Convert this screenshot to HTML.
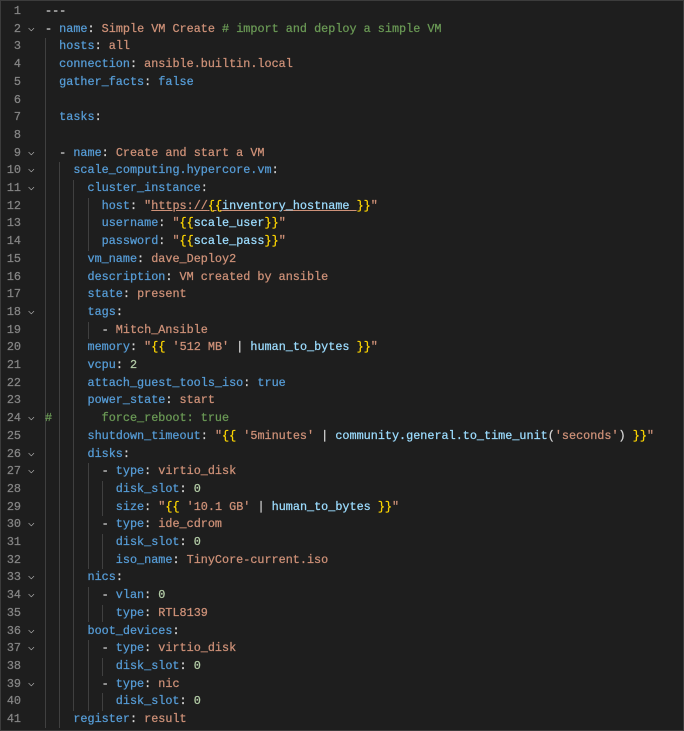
<!DOCTYPE html>
<html><head><meta charset="utf-8"><style>
html,body{margin:0;padding:0;background:#1e1e1e;}
body{width:684px;height:731px;position:relative;overflow:hidden;font-family:"Liberation Mono",monospace;font-size:11.8px;}
.l{position:absolute;left:0;height:17.7px;line-height:17.7px;white-space:pre;color:#d4d4d4;-webkit-text-stroke:0.25px currentColor;}
.n{position:absolute;left:0;width:21px;text-align:right;color:#858585;}
.f{position:absolute;left:28px;color:#c5c5c5;font-size:11px;-webkit-text-stroke:0;}
.c{position:absolute;left:45px;}
.k{color:#569cd6}.s{color:#ce9178}.m{color:#6a9955}.d{color:#b5cea8}.b{color:#ffd700}.v{color:#9cdcfe}
.u{text-decoration:underline}
.g{position:absolute;width:1px;background:#404040;}
.frame{position:absolute;inset:0;border:1px solid #3c3c3c;pointer-events:none}
</style></head><body>
<div class="g" style="left:45px;top:38.4px;height:690px"></div>
<div class="g" style="left:59px;top:162.3px;height:566px"></div>
<div class="g" style="left:73px;top:180px;height:531px"></div>
<div class="g" style="left:88px;top:197.7px;height:53px"></div>
<div class="g" style="left:88px;top:321.6px;height:17.7px"></div>
<div class="g" style="left:88px;top:463.2px;height:106px"></div>
<div class="g" style="left:88px;top:587.1px;height:35.4px"></div>
<div class="g" style="left:88px;top:640.2px;height:70.8px"></div>
<div class="g" style="left:102px;top:480.9px;height:35.4px"></div>
<div class="g" style="left:102px;top:534px;height:35.4px"></div>
<div class="g" style="left:102px;top:604.8px;height:17.7px"></div>
<div class="g" style="left:102px;top:657.9px;height:17.7px"></div>
<div class="g" style="left:102px;top:693.3px;height:17.7px"></div>

<div class="l" style="top:3px"><span class="n">1</span><span class="c">---</span></div>
<div class="l" style="top:20.7px"><span class="n">2</span><span class="f">⌵</span><span class="c">- <span class="k">name</span>: <span class="s">Simple VM Create</span> <span class="m"># import and deploy a simple VM</span></span></div>
<div class="l" style="top:38.4px"><span class="n">3</span><span class="c">  <span class="k">hosts</span>: <span class="s">all</span></span></div>
<div class="l" style="top:56.1px"><span class="n">4</span><span class="c">  <span class="k">connection</span>: <span class="s">ansible.builtin.local</span></span></div>
<div class="l" style="top:73.8px"><span class="n">5</span><span class="c">  <span class="k">gather_facts</span>: <span class="k">false</span></span></div>
<div class="l" style="top:91.5px"><span class="n">6</span></div>
<div class="l" style="top:109.2px"><span class="n">7</span><span class="c">  <span class="k">tasks</span>:</span></div>
<div class="l" style="top:126.9px"><span class="n">8</span></div>
<div class="l" style="top:144.6px"><span class="n">9</span><span class="f">⌵</span><span class="c">  - <span class="k">name</span>: <span class="s">Create and start a VM</span></span></div>
<div class="l" style="top:162.3px"><span class="n">10</span><span class="f">⌵</span><span class="c">    <span class="k">scale_computing.hypercore.vm</span>:</span></div>
<div class="l" style="top:180px"><span class="n">11</span><span class="f">⌵</span><span class="c">      <span class="k">cluster_instance</span>:</span></div>
<div class="l" style="top:197.7px"><span class="n">12</span><span class="c">        <span class="k">host</span>: <span class="s">"<span class="u">https://<span class="b">{{</span><span class="v">inventory_hostname</span> </span><span class="b">}}</span>"</span></span></div>
<div class="l" style="top:215.4px"><span class="n">13</span><span class="c">        <span class="k">username</span>: <span class="s">"<span class="b">{{</span><span class="v">scale_user</span><span class="b">}}</span>"</span></span></div>
<div class="l" style="top:233.1px"><span class="n">14</span><span class="c">        <span class="k">password</span>: <span class="s">"<span class="b">{{</span><span class="v">scale_pass</span><span class="b">}}</span>"</span></span></div>
<div class="l" style="top:250.8px"><span class="n">15</span><span class="c">      <span class="k">vm_name</span>: <span class="s">dave_Deploy2</span></span></div>
<div class="l" style="top:268.5px"><span class="n">16</span><span class="c">      <span class="k">description</span>: <span class="s">VM created by ansible</span></span></div>
<div class="l" style="top:286.2px"><span class="n">17</span><span class="c">      <span class="k">state</span>: <span class="s">present</span></span></div>
<div class="l" style="top:303.9px"><span class="n">18</span><span class="f">⌵</span><span class="c">      <span class="k">tags</span>:</span></div>
<div class="l" style="top:321.6px"><span class="n">19</span><span class="c">        - <span class="s">Mitch_Ansible</span></span></div>
<div class="l" style="top:339.3px"><span class="n">20</span><span class="c">      <span class="k">memory</span>: <span class="s">"<span class="b">{{</span> '512 MB' <span style="color:#d4d4d4">|</span> <span class="v">human_to_bytes</span> <span class="b">}}</span>"</span></span></div>
<div class="l" style="top:357px"><span class="n">21</span><span class="c">      <span class="k">vcpu</span>: <span class="d">2</span></span></div>
<div class="l" style="top:374.7px"><span class="n">22</span><span class="c">      <span class="k">attach_guest_tools_iso</span>: <span class="k">true</span></span></div>
<div class="l" style="top:392.4px"><span class="n">23</span><span class="c">      <span class="k">power_state</span>: <span class="s">start</span></span></div>
<div class="l" style="top:410.1px"><span class="n">24</span><span class="f">⌵</span><span class="c m">#       force_reboot: true</span></div>
<div class="l" style="top:427.8px"><span class="n">25</span><span class="c">      <span class="k">shutdown_timeout</span>: <span class="s">"<span class="b">{{</span> '5minutes' <span style="color:#d4d4d4">|</span> <span class="v">community.general.to_time_unit</span><span style="color:#d4d4d4">(</span>'seconds'<span style="color:#d4d4d4">)</span> <span class="b">}}</span>"</span></span></div>
<div class="l" style="top:445.5px"><span class="n">26</span><span class="f">⌵</span><span class="c">      <span class="k">disks</span>:</span></div>
<div class="l" style="top:463.2px"><span class="n">27</span><span class="f">⌵</span><span class="c">        - <span class="k">type</span>: <span class="s">virtio_disk</span></span></div>
<div class="l" style="top:480.9px"><span class="n">28</span><span class="c">          <span class="k">disk_slot</span>: <span class="d">0</span></span></div>
<div class="l" style="top:498.6px"><span class="n">29</span><span class="c">          <span class="k">size</span>: <span class="s">"<span class="b">{{</span> '10.1 GB' <span style="color:#d4d4d4">|</span> <span class="v">human_to_bytes</span> <span class="b">}}</span>"</span></span></div>
<div class="l" style="top:516.3px"><span class="n">30</span><span class="f">⌵</span><span class="c">        - <span class="k">type</span>: <span class="s">ide_cdrom</span></span></div>
<div class="l" style="top:534px"><span class="n">31</span><span class="c">          <span class="k">disk_slot</span>: <span class="d">0</span></span></div>
<div class="l" style="top:551.7px"><span class="n">32</span><span class="c">          <span class="k">iso_name</span>: <span class="s">TinyCore-current.iso</span></span></div>
<div class="l" style="top:569.4px"><span class="n">33</span><span class="f">⌵</span><span class="c">      <span class="k">nics</span>:</span></div>
<div class="l" style="top:587.1px"><span class="n">34</span><span class="f">⌵</span><span class="c">        - <span class="k">vlan</span>: <span class="d">0</span></span></div>
<div class="l" style="top:604.8px"><span class="n">35</span><span class="c">          <span class="k">type</span>: <span class="s">RTL8139</span></span></div>
<div class="l" style="top:622.5px"><span class="n">36</span><span class="f">⌵</span><span class="c">      <span class="k">boot_devices</span>:</span></div>
<div class="l" style="top:640.2px"><span class="n">37</span><span class="f">⌵</span><span class="c">        - <span class="k">type</span>: <span class="s">virtio_disk</span></span></div>
<div class="l" style="top:657.9px"><span class="n">38</span><span class="c">          <span class="k">disk_slot</span>: <span class="d">0</span></span></div>
<div class="l" style="top:675.6px"><span class="n">39</span><span class="f">⌵</span><span class="c">        - <span class="k">type</span>: <span class="s">nic</span></span></div>
<div class="l" style="top:693.3px"><span class="n">40</span><span class="c">          <span class="k">disk_slot</span>: <span class="d">0</span></span></div>
<div class="l" style="top:711px"><span class="n">41</span><span class="c">    <span class="k">register</span>: <span class="s">result</span></span></div>
<div class="frame"></div>
</body></html>
